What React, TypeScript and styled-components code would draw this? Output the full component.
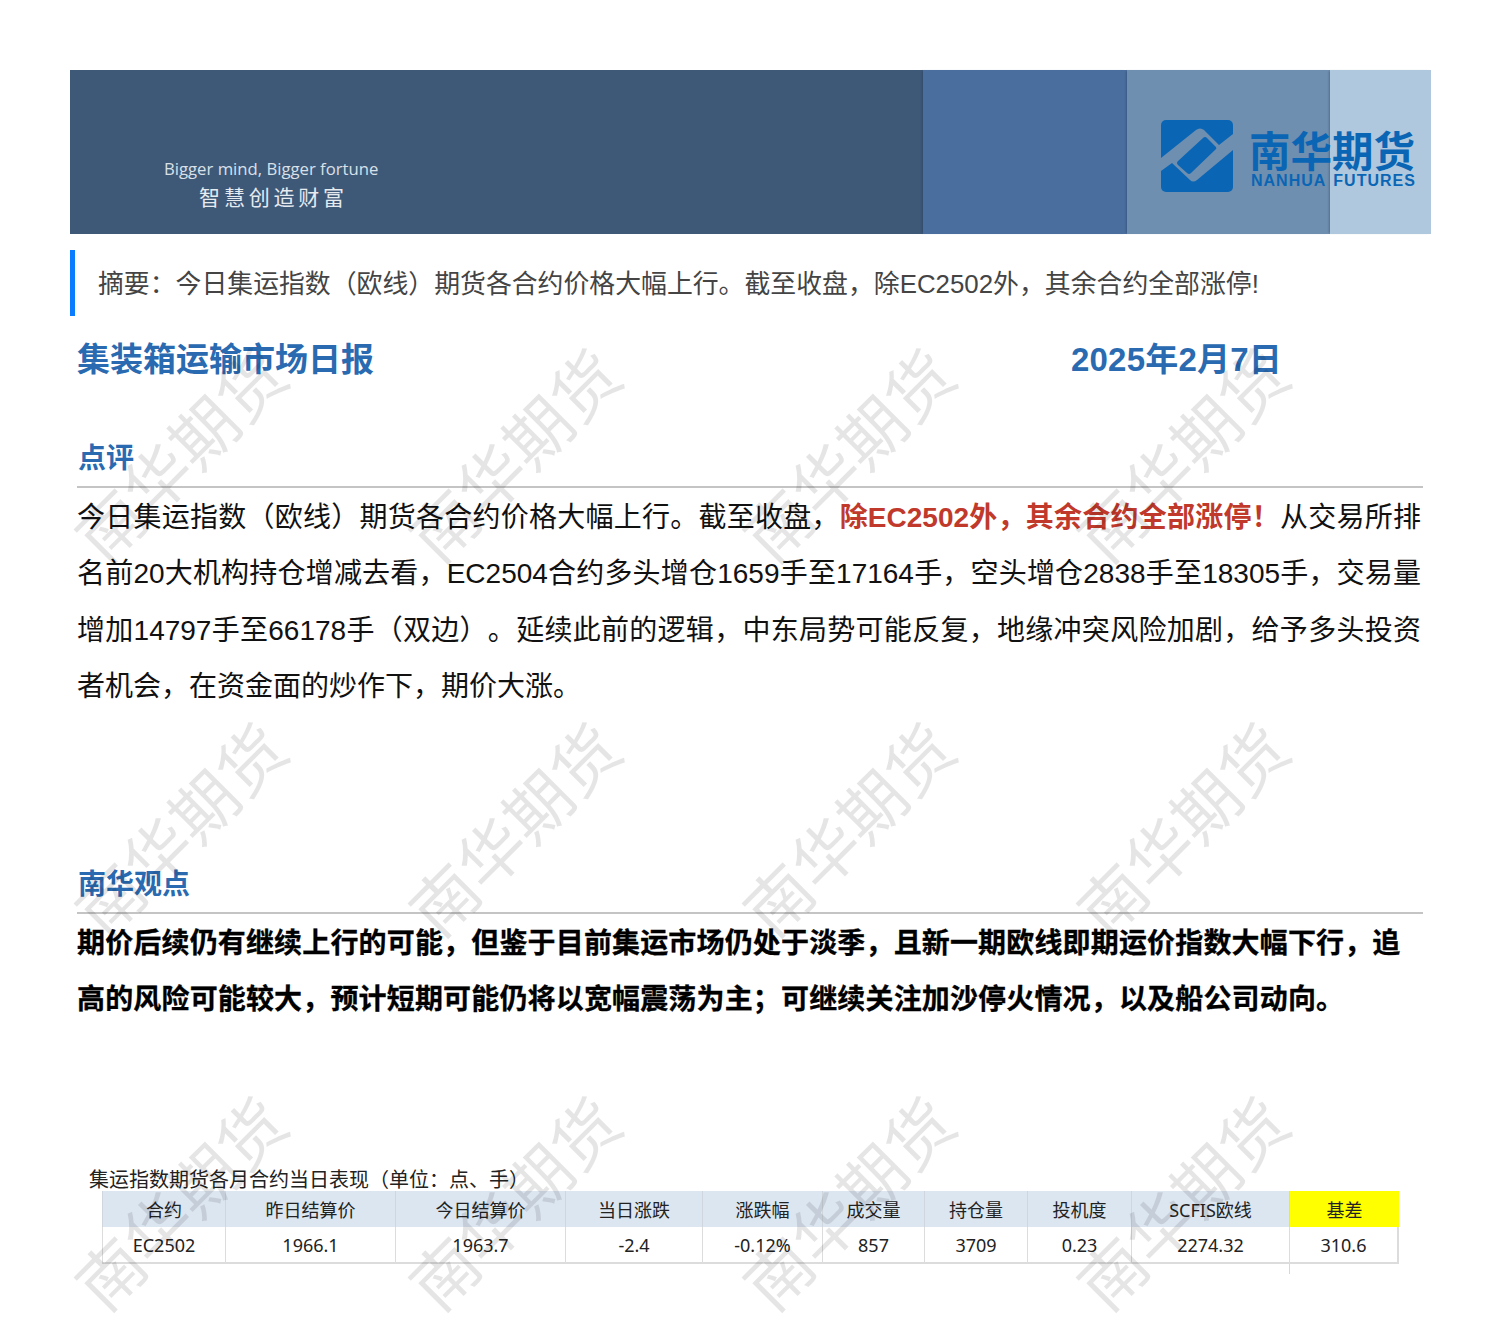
import React from 'react'
import styled, { createGlobalStyle } from 'styled-components'

const cjk = `"Noto Sans CJK SC", sans-serif`
const latinCjk = `"Liberation Sans", "Noto Sans CJK SC", sans-serif`

const GlobalStyle = createGlobalStyle`
    html, body {
        margin: 0;
        padding: 0;
        background: #fff;
    }
    body {
        font-family: ${latinCjk};
        color: #000;
        text-spacing-trim: space-all;
    }
`

const columns = [
    { name: '合约', value: 'EC2502', width: 123 },
    { name: '昨日结算价', value: '1966.1', width: 170 },
    { name: '今日结算价', value: '1963.7', width: 170 },
    { name: '当日涨跌', value: '-2.4', width: 137 },
    { name: '涨跌幅', value: '-0.12%', width: 120 },
    { name: '成交量', value: '857', width: 102 },
    { name: '持仓量', value: '3709', width: 103 },
    { name: '投机度', value: '0.23', width: 104 },
    { name: 'SCFIS欧线', value: '2274.32', width: 158 },
    { name: '基差', value: '310.6', width: 110, highlight: true },
]

const watermarkRows = [453, 827, 1201]
const watermarkCols = [178, 512, 846, 1180]

const Logo: React.FC = () => (
    <LogoBox>
        <svg width="72" height="72" viewBox="0 0 72 72">
            <rect width="72" height="72" rx="5" fill="#0a66b5" />
            <path d="M0 38 L35 10 Q39 7 43 10 L58 25 L72 14 L72 30 L36 60 Q32 63 29 60 L11 43 L0 51 Z" fill="#6f8fb0" />
            <path d="M42 18 Q44 16 46 18 L55 27 Q56 29 54 30 L30 53 Q28 55 26 53 L17 45 Q15 43 17 41 Z" fill="#0a66b5" />
        </svg>
        <LogoText>
            <LogoName>南华期货</LogoName>
            <LogoLatin>
                <span>NANHUA</span>
                <span>FUTURES</span>
            </LogoLatin>
        </LogoText>
    </LogoBox>
)

const App: React.FC = () => {
    return (
        <Page>
            <GlobalStyle />
            <Banner>
                <BannerMain>
                    <SloganEn>Bigger mind, Bigger fortune</SloganEn>
                    <SloganCn>智慧创造财富</SloganCn>
                </BannerMain>
                <BannerBlock width={204} color="#4a6f9e" />
                <BannerBlock width={203} color="#6f8fb0" />
                <BannerBlock width={101} color="#b0c8dd" />
                <Logo />
            </Banner>

            <Summary>摘要：今日集运指数（欧线）期货各合约价格大幅上行。截至收盘，除EC2502外，其余合约全部涨停!</Summary>

            <TitleRow>
                <Title>集装箱运输市场日报</Title>
                <DateText>2025年2月7日</DateText>
            </TitleRow>

            <Section>
                <SectionTitle>点评</SectionTitle>
                <Body>
                    今日集运指数（欧线）期货各合约价格大幅上行。截至收盘，<Red>除EC2502外，其余合约全部涨停！</Red>从交易所排名前20大机构持仓增减去看，EC2504合约多头增仓1659手至17164手，空头增仓2838手至18305手，交易量增加14797手至66178手（双边）。延续此前的逻辑，中东局势可能反复，地缘冲突风险加剧，给予多头投资者机会，在资金面的炒作下，期价大涨。
                </Body>
            </Section>

            <ViewSection>
                <SectionTitle>南华观点</SectionTitle>
                <BoldBody>
                    期价后续仍有继续上行的可能，但鉴于目前集运市场仍处于淡季，且新一期欧线即期运价指数大幅下行，追高的风险可能较大，预计短期可能仍将以宽幅震荡为主；可继续关注加沙停火情况，以及船公司动向。
                </BoldBody>
            </ViewSection>

            <TableBlock>
                <Caption>集运指数期货各月合约当日表现（单位：点、手）</Caption>
                <Table>
                    <Row>
                        {columns.map(c => (
                            <HeadCell key={c.name} width={c.width} highlight={c.highlight}>{c.name}</HeadCell>
                        ))}
                    </Row>
                    <Row>
                        {columns.map(c => (
                            <DataCell key={c.name} width={c.width}>{c.value}</DataCell>
                        ))}
                    </Row>
                    <Tick />
                </Table>
            </TableBlock>

            {watermarkRows.map(y => watermarkCols.map(x => (
                <Watermark key={`${x}-${y}`} style={{ left: x, top: y }}>南华期货</Watermark>
            )))}
        </Page>
    )
}

const Page = styled.div`
    position: relative;
    width: 1500px;
    height: 1320px;
    overflow: hidden;
    padding: 70px 69px 0 70px;
    box-sizing: border-box;
    background: #fff;
`

const Banner = styled.div`
    position: relative;
    display: flex;
    height: 164px;
`

const BannerMain = styled.div`
    flex: 1;
    background: #3e5878;
    display: flex;
    flex-direction: column;
    padding: 88px 0 0 94px;
    box-sizing: border-box;
`

const BannerBlock = styled.div<{ width: number; color: string }>`
    width: ${props => props.width}px;
    background: ${props => props.color};
    box-shadow: -2px 0 2px -1px rgba(30, 50, 80, 0.35);
`

const SloganEn = styled.div`
    font-family: "Open Sans", sans-serif;
    font-size: 16.7px;
    line-height: 22px;
    color: #d9e0e8;
    width: 214px;
    white-space: nowrap;
    text-align: center;
`

const SloganCn = styled.div`
    font-family: ${cjk};
    font-size: 21px;
    line-height: 28px;
    margin-top: 2px;
    padding-left: 5px;
    letter-spacing: 3.8px;
    color: #e6ebf0;
    width: 214px;
    box-sizing: border-box;
    text-align: center;
`

const LogoBox = styled.div`
    position: absolute;
    left: 1091px;
    top: 50px;
    display: flex;
    gap: 17px;
`

const LogoText = styled.div`
    display: flex;
    flex-direction: column;
    width: 165px;
`

const LogoName = styled.div`
    font-family: ${cjk};
    font-weight: 700;
    font-size: 41.5px;
    line-height: 46px;
    margin: 6px 0 0 -1px;
    color: #0a66b5;
    white-space: nowrap;
`

const LogoLatin = styled.div`
    font-family: "Liberation Sans", sans-serif;
    font-weight: 700;
    font-size: 16px;
    line-height: 16px;
    letter-spacing: 1px;
    margin: 1px 0 0 1px;
    color: #0a66b5;
    display: flex;
    gap: 7px;
    white-space: nowrap;
`

const Summary = styled.div`
    margin-top: 16px;
    height: 66px;
    border-left: 5px solid #0a7cff;
    padding-left: 23px;
    font-size: 25.87px;
    line-height: 68px;
    color: #444;
    white-space: nowrap;
`

const TitleRow = styled.div`
    display: flex;
    margin-top: 18px;
    padding-left: 7px;
    height: 50px;
`

const Title = styled.h1`
    margin: 0;
    width: 994px;
    font-family: ${cjk};
    font-size: 33px;
    line-height: 46px;
    font-weight: 700;
    color: #2a6ab0;
`

const DateText = styled.div`
    font-size: 33px;
    line-height: 52px;
    letter-spacing: 0.2px;
    font-weight: 700;
    color: #2a6ab0;
`

const Section = styled.section`
    margin-top: 50px;
    padding-left: 7px;
    width: 1346px;
`

const ViewSection = styled(Section)`
    margin-top: 144px;
`

const SectionTitle = styled.h2`
    margin: 0;
    padding-left: 1px;
    height: 52px;
    font-family: ${cjk};
    font-size: 28px;
    line-height: 44px;
    font-weight: 700;
    color: #2a6ab0;
    border-bottom: 2px solid #c4c4c4;
    box-sizing: content-box;
`

const Body = styled.p`
    margin: 2px 0 0;
    padding: 0 2px 0 0;
    font-size: 28px;
    line-height: 56.4px;
    text-align: justify;
    color: #111;
`

const Red = styled.strong`
    color: #c0392b;
    font-weight: 700;
`

const BoldBody = styled(Body)`
    font-weight: 700;
    color: #000;
    text-align: left;
    letter-spacing: 0.16px;
    -webkit-text-stroke: 0.3px #000;
`

const TableBlock = styled.div`
    margin-top: 137px;
    padding-left: 19px;
`

const Caption = styled.div`
    font-family: ${cjk};
    font-size: 20px;
    line-height: 28px;
    color: #222;
    height: 26px;
    white-space: nowrap;
`

const Table = styled.div`
    position: relative;
    margin-left: 13px;
    width: 1297px;
    font-family: "Noto Sans", ${cjk};
`

const Row = styled.div`
    display: flex;
`

const HeadCell = styled.div<{ width: number; highlight?: boolean }>`
    width: ${props => props.width}px;
    height: 36px;
    box-sizing: border-box;
    display: flex;
    align-items: center;
    justify-content: center;
    background: ${props => (props.highlight ? '#ffff00' : '#dce6f1')};
    border-left: 1px solid #cfd6de;
    font-size: 18px;
    color: #222;
`

const DataCell = styled.div<{ width: number }>`
    width: ${props => props.width}px;
    height: 37px;
    box-sizing: border-box;
    display: flex;
    align-items: center;
    justify-content: center;
    border-left: 1px solid #dcdcdc;
    border-bottom: 2px solid #dcdcdc;
    font-size: 18px;
    color: #222;

    &:last-child {
        border-right: 2px solid #dcdcdc;
    }
`

const Tick = styled.div`
    position: absolute;
    left: 1187px;
    top: 73px;
    width: 1px;
    height: 10px;
    background: #d8d8d8;
`

const Watermark = styled.div`
    position: absolute;
    transform: translate(-50%, -50%) rotate(-45deg);
    font-family: ${cjk};
    font-size: 66px;
    line-height: 66px;
    font-weight: 400;
    white-space: nowrap;
    color: rgba(0, 0, 0, 0.1);
    pointer-events: none;
`

export default App
